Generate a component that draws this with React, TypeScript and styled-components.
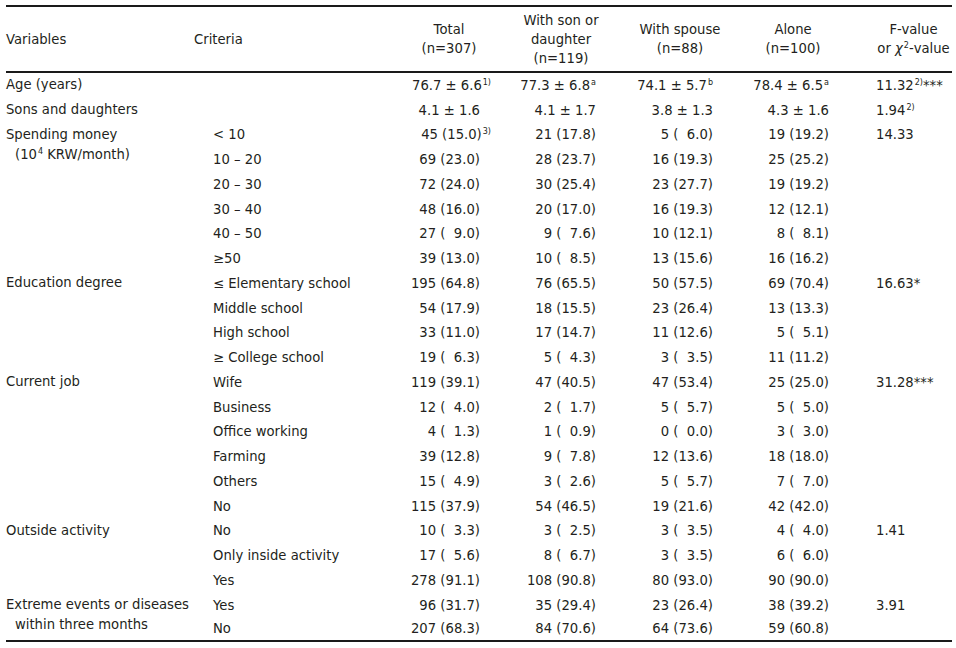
import React, { ReactNode } from 'react'
import styled, { createGlobalStyle } from 'styled-components'

const GlobalStyle = createGlobalStyle`
  html, body {
    margin: 0;
    padding: 0;
    background: #ffffff;
  }

  body {
    font-family: "DejaVu Sans", "Liberation Sans", sans-serif;
    color: #231f20;
  }
`

const Page = styled.div`
  padding: 5px 4px 0 6px;
  width: 956px;
  box-sizing: border-box;
`

const Table = styled.table`
  width: 946px;
  border-collapse: separate;
  border-spacing: 0;
  table-layout: fixed;
  font-size: 13.2px;
`

const Col = styled.col<{ $w: number }>`
  width: ${(p) => p.$w}px;
`

const HeadRow = styled.tr`
  height: 68px;
`

const Th = styled.th<{ $align?: 'left' | 'center'; $pl?: number }>`
  font-weight: normal;
  line-height: 19px;
  padding: 0 0 0 ${(p) => p.$pl ?? 0}px;
  text-align: ${(p) => p.$align ?? 'center'};
  vertical-align: middle;
  white-space: nowrap;
  border-top: 2px solid #1a1a1a;
  border-bottom: 2px solid #1a1a1a;
`

const Row = styled.tr`
  height: 24.75px;

  &:last-child > td {
    border-bottom: 2px solid #1a1a1a;
  }
`

const VarCell = styled.td<{ $last?: boolean }>`
  vertical-align: top;
  padding: 2px 0 0 9px;
  text-indent: -9px;
  line-height: 20px;
  white-space: nowrap;
  border-bottom: ${(p) => (p.$last ? '2px solid #1a1a1a' : 'none')};
`

const CritCell = styled.td`
  padding: 0 0 0 19px;
  white-space: nowrap;
`

const Num = styled.td<{ $pr: number }>`
  padding: 0 ${(p) => p.$pr}px 0 0;
  text-align: right;
  white-space: pre;
`

const Stat = styled.td`
  padding: 0 0 0 33px;
  white-space: pre;
`

const Sup = styled.sup<{ $hang?: boolean }>`
  font-size: 8px;
  line-height: 0;
  vertical-align: 5px;
  margin-left: 1px;
  margin-right: ${(p) => (p.$hang ? '-11px' : '0')};
`

const Chi = styled.span`
  font-style: italic;
`

const columns = [
  { w: 112, pr: 25, title: ['Total', '(n=307)'] },
  { w: 112, pr: 21, title: ['With son or', 'daughter', '(n=119)'] },
  { w: 126, pr: 30, title: ['With spouse', '(n=88)'] },
  { w: 100, pr: 14, title: ['Alone', '(n=100)'] },
]

const fig = '\u2007'

const n = (count: number, pct: string) => `${count} (${pct.padStart(4, fig)})`

type Line = { crit?: ReactNode; cells: ReactNode[]; f?: ReactNode }
type Group = { label: ReactNode; lines: Line[] }

const groups: Group[] = [
  {
    label: 'Age (years)',
    lines: [
      {
        cells: [
          <>76.7 ± 6.6<Sup $hang>1)</Sup></>,
          <>77.3 ± 6.8<Sup>a</Sup></>,
          <>74.1 ± 5.7<Sup>b</Sup></>,
          <>78.4 ± 6.5<Sup>a</Sup></>,
        ],
        f: <>11.32<Sup>2)</Sup>***</>,
      },
    ],
  },
  {
    label: 'Sons and daughters',
    lines: [
      {
        cells: ['4.1 ± 1.6', '4.1 ± 1.7', '3.8 ± 1.3', '4.3 ± 1.6'],
        f: <>1.94<Sup>2)</Sup></>,
      },
    ],
  },
  {
    label: (
      <>
        Spending money
        <br />
        (10<Sup>4</Sup> KRW/month)
      </>
    ),
    lines: [
      {
        crit: '< 10',
        cells: [<>{n(45, '15.0')}<Sup $hang>3)</Sup></>, n(21, '17.8'), n(5, '6.0'), n(19, '19.2')],
        f: '14.33',
      },
      { crit: '10 – 20', cells: [n(69, '23.0'), n(28, '23.7'), n(16, '19.3'), n(25, '25.2')] },
      { crit: '20 – 30', cells: [n(72, '24.0'), n(30, '25.4'), n(23, '27.7'), n(19, '19.2')] },
      { crit: '30 – 40', cells: [n(48, '16.0'), n(20, '17.0'), n(16, '19.3'), n(12, '12.1')] },
      { crit: '40 – 50', cells: [n(27, '9.0'), n(9, '7.6'), n(10, '12.1'), n(8, '8.1')] },
      { crit: '≥50', cells: [n(39, '13.0'), n(10, '8.5'), n(13, '15.6'), n(16, '16.2')] },
    ],
  },
  {
    label: 'Education degree',
    lines: [
      {
        crit: '≤ Elementary school',
        cells: [n(195, '64.8'), n(76, '65.5'), n(50, '57.5'), n(69, '70.4')],
        f: '16.63*',
      },
      { crit: 'Middle school', cells: [n(54, '17.9'), n(18, '15.5'), n(23, '26.4'), n(13, '13.3')] },
      { crit: 'High school', cells: [n(33, '11.0'), n(17, '14.7'), n(11, '12.6'), n(5, '5.1')] },
      { crit: '≥ College school', cells: [n(19, '6.3'), n(5, '4.3'), n(3, '3.5'), n(11, '11.2')] },
    ],
  },
  {
    label: 'Current job',
    lines: [
      {
        crit: 'Wife',
        cells: [n(119, '39.1'), n(47, '40.5'), n(47, '53.4'), n(25, '25.0')],
        f: '31.28***',
      },
      { crit: 'Business', cells: [n(12, '4.0'), n(2, '1.7'), n(5, '5.7'), n(5, '5.0')] },
      { crit: 'Office working', cells: [n(4, '1.3'), n(1, '0.9'), n(0, '0.0'), n(3, '3.0')] },
      { crit: 'Farming', cells: [n(39, '12.8'), n(9, '7.8'), n(12, '13.6'), n(18, '18.0')] },
      { crit: 'Others', cells: [n(15, '4.9'), n(3, '2.6'), n(5, '5.7'), n(7, '7.0')] },
      { crit: 'No', cells: [n(115, '37.9'), n(54, '46.5'), n(19, '21.6'), n(42, '42.0')] },
    ],
  },
  {
    label: 'Outside activity',
    lines: [
      { crit: 'No', cells: [n(10, '3.3'), n(3, '2.5'), n(3, '3.5'), n(4, '4.0')], f: '1.41' },
      { crit: 'Only inside activity', cells: [n(17, '5.6'), n(8, '6.7'), n(3, '3.5'), n(6, '6.0')] },
      { crit: 'Yes', cells: [n(278, '91.1'), n(108, '90.8'), n(80, '93.0'), n(90, '90.0')] },
    ],
  },
  {
    label: (
      <>
        Extreme events or diseases
        <br />
        within three months
      </>
    ),
    lines: [
      { crit: 'Yes', cells: [n(96, '31.7'), n(35, '29.4'), n(23, '26.4'), n(38, '39.2')], f: '3.91' },
      { crit: 'No', cells: [n(207, '68.3'), n(84, '70.6'), n(64, '73.6'), n(59, '60.8')] },
    ],
  },
]

export default function App() {
  return (
    <>
      <GlobalStyle />
      <Page>
        <Table>
          <colgroup>
            <Col $w={188} />
            <Col $w={199} />
            {columns.map((c) => (
              <Col key={c.title[0]} $w={c.w} />
            ))}
            <Col $w={109} />
          </colgroup>
          <thead>
            <HeadRow>
              <Th $align="left">Variables</Th>
              <Th $align="left">Criteria</Th>
              {columns.map((c) => (
                <Th key={c.title[0]}>
                  {c.title.map((t, i) => (
                    <React.Fragment key={t}>
                      {i > 0 && <br />}
                      {t}
                    </React.Fragment>
                  ))}
                </Th>
              ))}
              <Th $pl={32}>
                F-value
                <br />
                or <Chi>χ</Chi>
                <Sup>2</Sup>-value
              </Th>
            </HeadRow>
          </thead>
          <tbody>
            {groups.map((g, gi) =>
              g.lines.map((line, li) => (
                <Row key={`${gi}-${li}`}>
                  {li === 0 && (
                    <VarCell rowSpan={g.lines.length} $last={gi === groups.length - 1}>
                      {g.label}
                    </VarCell>
                  )}
                  <CritCell>{line.crit}</CritCell>
                  {line.cells.map((cell, ci) => (
                    <Num key={ci} $pr={columns[ci].pr}>
                      {cell}
                    </Num>
                  ))}
                  <Stat>{line.f}</Stat>
                </Row>
              )),
            )}
          </tbody>
        </Table>
      </Page>
    </>
  )
}
